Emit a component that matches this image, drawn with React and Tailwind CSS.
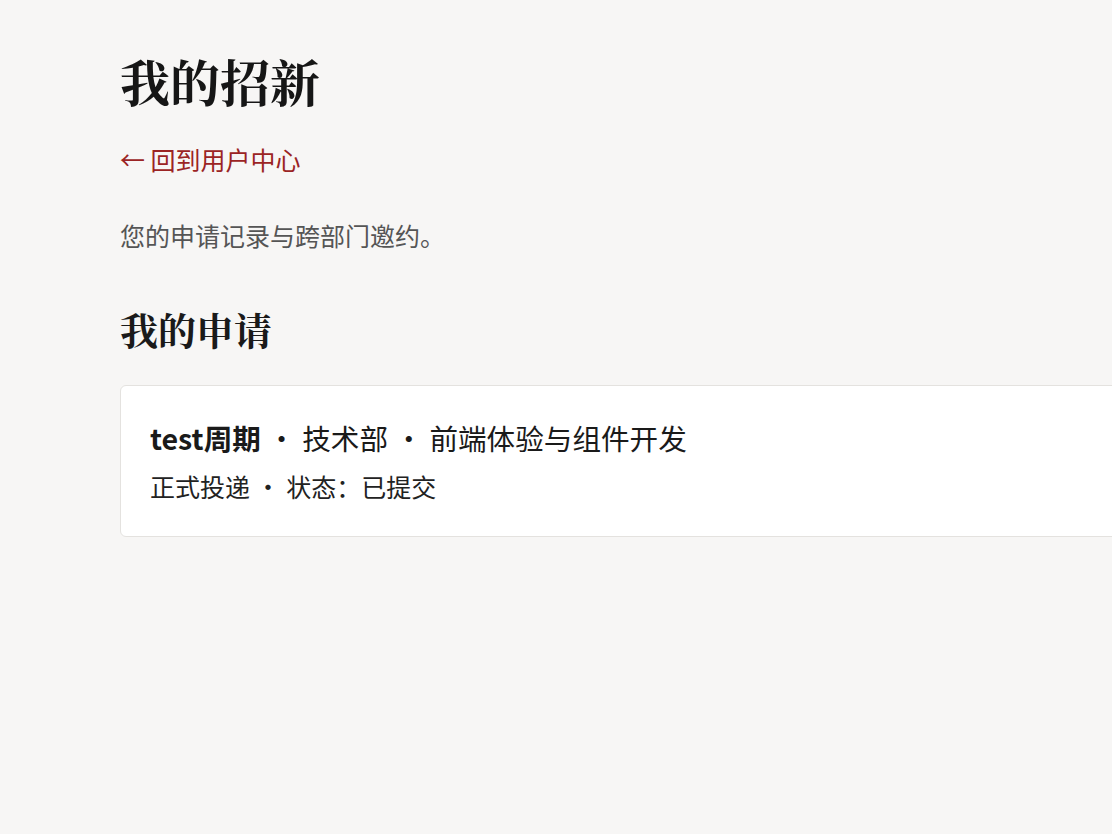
export default function App() {
  const sans = { fontFamily: '"Noto Sans CJK SC", "Noto Sans", sans-serif' };
  const serif = { fontFamily: '"Noto Serif CJK SC", "Liberation Serif", "Noto Sans CJK SC", serif' };
  return (
    <div className="min-h-screen w-full overflow-hidden bg-[#f7f6f5] text-[#1c1c1c]" style={sans}>
      <div className="pl-[120px] pt-[50px]">
        <h1 className="text-[50px] font-bold leading-[60px] text-[#161616]" style={serif}>
          我的招新
        </h1>
        <a href="#" className="mt-[31px] block text-[25px] leading-[36px] text-[#9b2424]">
          ← 回到用户中心
        </a>
        <p className="mt-[40px] text-[25px] leading-[36px] text-[#555555]">您的申请记录与跨部门邀约。</p>
        <h2 className="mt-[52px] text-[38px] font-bold leading-[48px] text-[#1a1a1a]" style={serif}>
          我的申请
        </h2>
        <div className="mt-[32px] w-[1100px] rounded-[6px] border border-[#e4e2df] bg-white pb-[32px] pl-[29px] pt-[32px]">
          <div className="text-[28.6px] leading-[40px] text-[#1a1a1a]">
            <span className="font-bold">test周期</span>
            <span> · 技术部 · 前端体验与组件开发</span>
          </div>
          <div className="mt-[10px] text-[25px] leading-[36px] text-[#222222]">正式投递 · 状态：已提交</div>
        </div>
      </div>
    </div>
  );
}
